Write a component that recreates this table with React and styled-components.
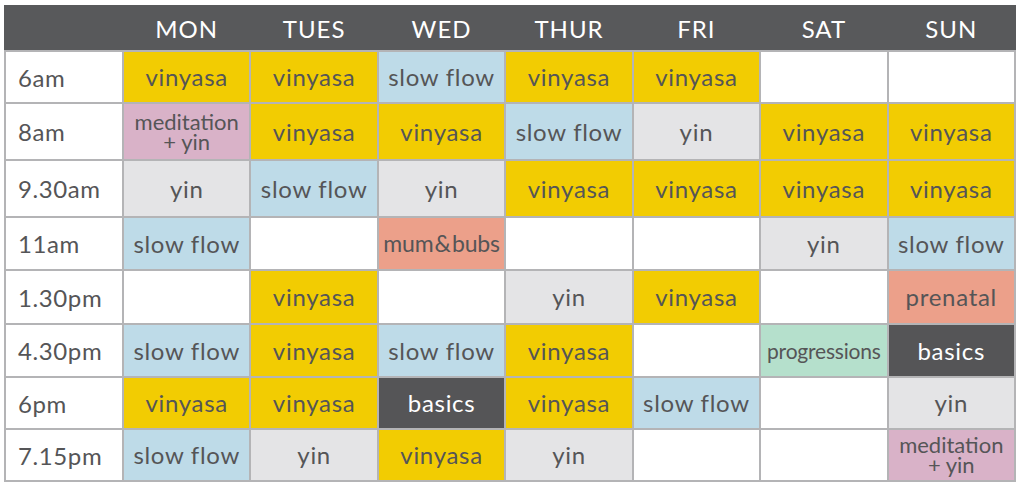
import React from 'react';
import styled, { createGlobalStyle } from 'styled-components';

const GlobalStyle = createGlobalStyle`
  html, body {
    margin: 0;
    padding: 0;
    background: #ffffff;
  }
  body {
    font-family: Lato, "Liberation Sans", sans-serif;
  }
`;

const COLORS = {
  vinyasa: '#f2cc02',
  slow: '#bedbe8',
  yin: '#e4e4e6',
  med: '#d9b2c8',
  mum: '#eca08a',
  prog: '#b5e0cc',
  dark: '#555557',
  none: '#ffffff',
};

const DAYS = ['MON', 'TUES', 'WED', 'THUR', 'FRI', 'SAT', 'SUN'];

const ROW_HEIGHTS = [50, 55, 55, 51, 52, 51, 50, 50];

const V = { label: 'vinyasa', kind: 'vinyasa' };
const S = { label: 'slow flow', kind: 'slow' };
const Y = { label: 'yin', kind: 'yin' };
const M = { label: 'meditation\n+ yin', kind: 'med', size: 'stacked' };
const B = { label: 'basics', kind: 'dark' };
const E = { label: '', kind: 'none' };

const schedule = [
  { time: '6am', classes: [V, V, S, V, V, E, E] },
  { time: '8am', classes: [M, V, V, S, Y, V, V] },
  { time: '9.30am', classes: [Y, S, Y, V, V, V, V] },
  { time: '11am', classes: [S, E, { label: 'mum\u200a&\u200abubs', kind: 'mum', size: 'narrow' }, E, E, Y, S] },
  { time: '1.30pm', classes: [E, V, E, Y, V, E, { label: 'prenatal', kind: 'mum' }] },
  { time: '4.30pm', classes: [S, V, S, V, E, { label: 'progressions', kind: 'prog', size: 'tight' }, B] },
  { time: '6pm', classes: [V, V, B, V, S, E, Y] },
  { time: '7.15pm', classes: [S, Y, V, Y, E, E, M] },
];

const Timetable = styled.div`
  width: 1012px;
  margin: 5px 0 0 4px;
`;

const HeaderRow = styled.div`
  display: grid;
  grid-template-columns: 116px repeat(7, 1fr);
  column-gap: 2px;
  padding: 0 2px;
  height: 45px;
  background: #58595b;
  align-items: center;
`;

const DayName = styled.div`
  color: #ffffff;
  font-size: 24px;
  letter-spacing: 1px;
  text-align: center;
  padding-top: 1px;
`;

const Body = styled.div`
  display: grid;
  grid-template-columns: 116px repeat(7, 1fr);
  grid-template-rows: ${ROW_HEIGHTS.map((h) => `${h}px`).join(' ')};
  gap: 2px;
  padding: 2px;
  background: #b4b4b6;
`;

const TimeCell = styled.div`
  display: flex;
  align-items: center;
  padding-left: 12px;
  background: #ffffff;
  color: #555557;
  font-size: 24px;
  letter-spacing: 0.6px;
`;

const sizes = {
  normal: { font: '24px', spacing: '0.7px', line: '1' },
  narrow: { font: '23px', spacing: '-0.2px', line: '1' },
  tight: { font: '21px', spacing: '-0.2px', line: '1' },
  stacked: { font: '22px', spacing: '0px', line: '20px' },
};

const ClassCell = styled.div`
  display: flex;
  align-items: center;
  justify-content: center;
  text-align: center;
  white-space: pre-line;
  background: ${(p) => COLORS[p.kind]};
  color: ${(p) => (p.kind === 'dark' ? '#ffffff' : '#555557')};
  font-size: ${(p) => sizes[p.size].font};
  letter-spacing: ${(p) => sizes[p.size].spacing};
  line-height: ${(p) => sizes[p.size].line};
`;

export default function App() {
  return (
    <>
      <GlobalStyle />
      <Timetable>
        <HeaderRow>
          <div />
          {DAYS.map((d) => (
            <DayName key={d}>{d}</DayName>
          ))}
        </HeaderRow>
        <Body>
          {schedule.map((row) => (
            <React.Fragment key={row.time}>
              <TimeCell>{row.time}</TimeCell>
              {row.classes.map((c, i) => (
                <ClassCell key={i} kind={c.kind} size={c.size || 'normal'}>
                  {c.label}
                </ClassCell>
              ))}
            </React.Fragment>
          ))}
        </Body>
      </Timetable>
    </>
  );
}
